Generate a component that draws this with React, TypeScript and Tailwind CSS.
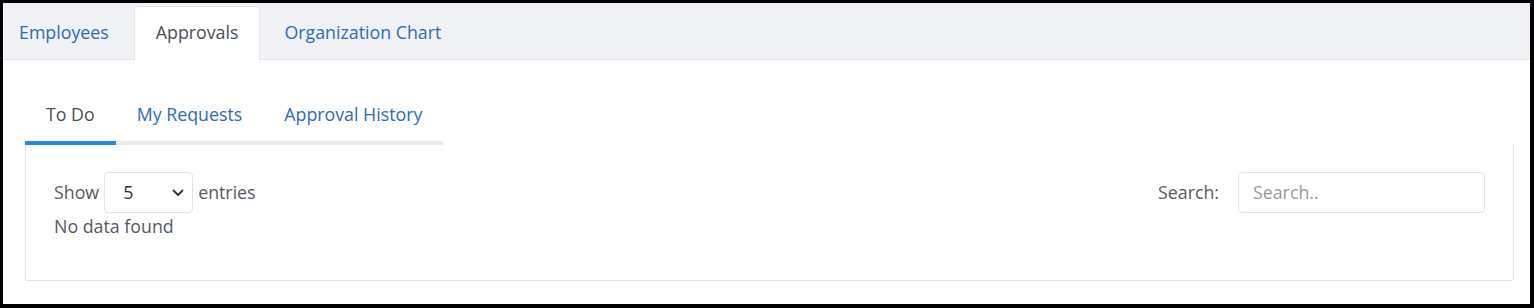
import React from "react";

export default function App() {
  const font = { fontFamily: '"Open Sans", "Noto Sans", sans-serif' };
  return (
    <div
      className="w-[1534px] h-[308px] bg-white border-black border-t-[3px] border-l-[3px] border-r-[4px] border-b-[4px] overflow-hidden"
      style={font}
    >
      {/* Top tabs */}
      <div className="h-[57px] bg-[#f0f2f6] border-b border-[#e2e4e8] flex items-end">
        <div className="flex items-end h-full">
          <div className="pl-[16px] pr-[25px] h-[53px] pb-[3px] flex items-center text-[17.8px] text-[#2e6db4] mb-[-1px]">
            Employees
          </div>
          <div className="px-[21px] h-[54px] pb-[3px] flex items-center text-[17.8px] text-[#4a4f55] bg-white border border-b-0 border-[#e4e6ea] rounded-t-[5px] mb-[-1px]">
            Approvals
          </div>
          <div className="pl-[24px] pr-[20px] h-[53px] pb-[3px] flex items-center text-[17.8px] text-[#2e6db4] mb-[-1px]">
            Organization Chart
          </div>
        </div>
      </div>

      {/* Content */}
      <div className="pl-[22px] pr-[16px] pt-[22px]">
        <div className="flex">
          <div className="px-[21px] pt-[20px] pb-[15px] border-b-4 border-[#2a8bd2] text-[17.8px] leading-[24px] text-[#4a4f55]">
            To Do
          </div>
          <div className="px-[21px] pt-[20px] pb-[15px] border-b-4 border-[#ebebeb] text-[17.8px] leading-[24px] text-[#2e6db4]">
            My Requests
          </div>
          <div className="px-[21px] pt-[20px] pb-[15px] border-b-4 border-[#ebebeb] text-[17.8px] leading-[24px] text-[#2e6db4]">
            Approval History
          </div>
        </div>
        <div className="border-x border-b border-[#e5e5e5] rounded-b-[3px] px-[28px] pt-[27px] pb-[41px] h-[136px]">
          <div className="flex items-center justify-between h-[41px]">
            <div className="flex items-center text-[17.8px] text-[#555a60]">
              <span>Show</span>
              <div className="ml-[5px] w-[89px] h-[41px] border border-[#dfe2e6] rounded-[4px] flex items-center justify-between pl-[18px] pr-[8px] text-[#333]">
                <span>5</span>
                <svg width="12" height="8" viewBox="0 0 12 8" fill="none">
                  <path d="M1.5 1.5 L6 6 L10.5 1.5" stroke="#333" strokeWidth="1.8" strokeLinecap="round" strokeLinejoin="round" />
                </svg>
              </div>
              <span className="ml-[5px]">entries</span>
            </div>
            <div className="flex items-center text-[17.8px] text-[#555a60]">
              <span>Search:</span>
              <div className="ml-[19px] w-[247px] h-[41px] border border-[#dfe2e6] rounded-[4px] flex items-center pl-[14px] text-[#9a9a9a]">
                Search..
              </div>
            </div>
          </div>
          <div className="text-[17.8px] leading-[26px] text-[#555a60]">No data found</div>
        </div>
      </div>
    </div>
  );
}
